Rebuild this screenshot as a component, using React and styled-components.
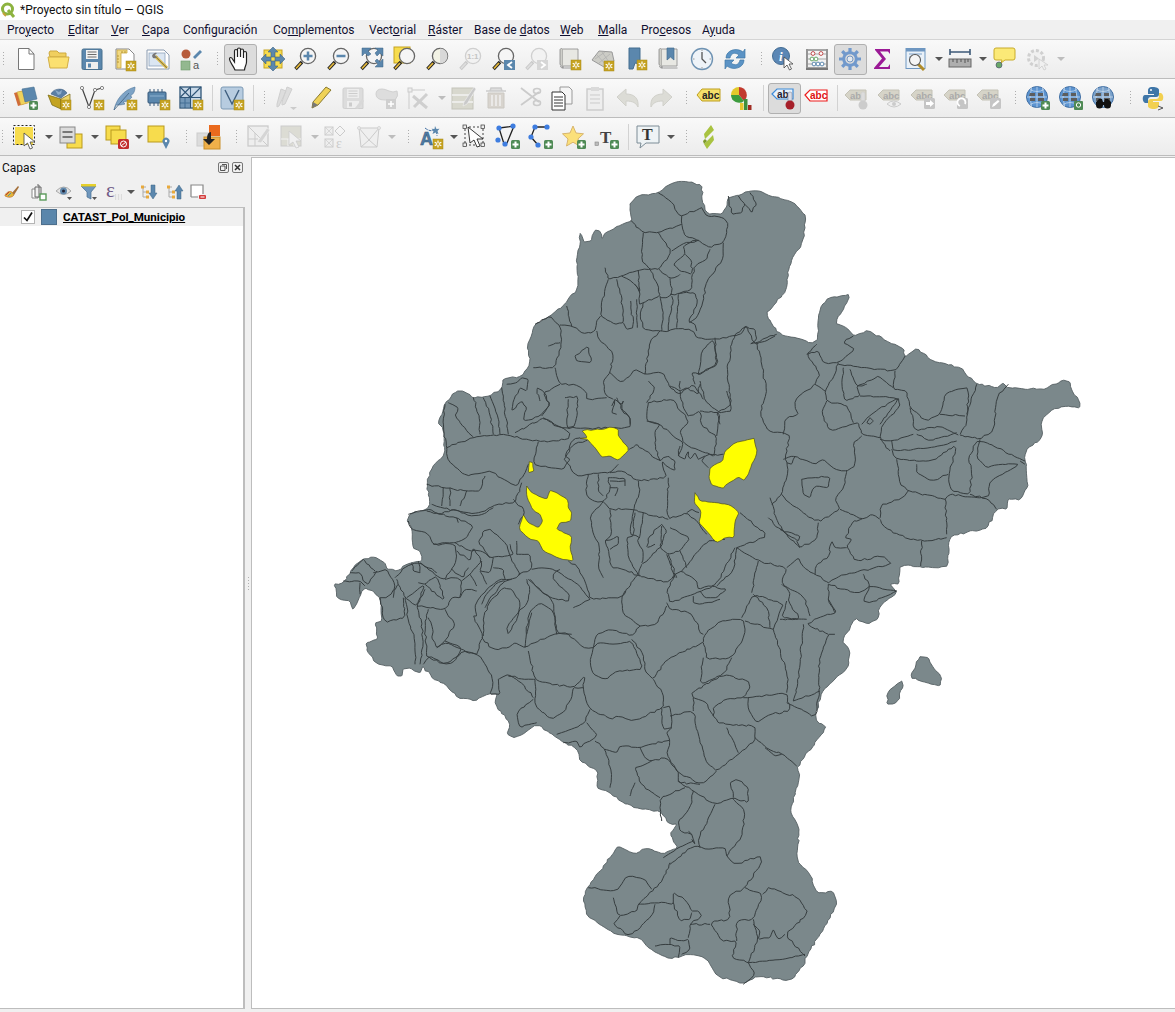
import React from "react";
import styled, { createGlobalStyle } from "styled-components";

const GlobalStyle = createGlobalStyle`
  html, body { margin: 0; padding: 0; background: #f0f0f0; }
  body { font-family: Roboto, "Liberation Sans", sans-serif; }
`;

/* ---------- map data, traced per crop of the reference ---------- */

const frame = (ox, oy, lines) =>
  lines.map(s =>
    s.split(" ").map(p => {
      const [x, y] = p.split(",").map(Number);
      return [ox + x / 3, oy + y / 3];
    })
  );

const OUTLINE =
  "630,203 637,195 658,192 670,183 683,180 702,184 702,200 708,213 722,213 727,205 728,197 735,195 750,190 760,190 770,195 790,200 798,206 806,215 803,240 790,262 786,290 775,303 766,312 778,333 817,343 820,307 828,297 851,293 835,322 847,327 854,335 868,329 890,342 904,348 905,356 917,347 932,360 962,367 967,375 977,383 997,387 1003,382 1008,387 1045,388 1063,379 1070,381 1072,390 1078,397 1080,407 1067,405 1053,408 1042,418 1042,437 1025,450 1027,480 1028,485 1020,499 1008,498 1007,508 997,508 987,527 950,535 948,565 937,567 900,564 899,583 890,583 897,592 880,605 878,618 868,623 855,617 842,640 850,650 848,667 822,690 815,718 827,727 797,765 800,775 790,810 799,827 797,860 810,873 817,892 833,890 837,905 805,957 805,963 790,980 757,975 743,983 717,975 707,958 688,953 670,958 653,950 640,937 615,933 607,928 587,915 583,898 588,885 613,853 618,845 635,853 647,847 663,853 678,847 670,833 677,823 668,822 660,810 640,808 620,800 607,790 597,787 598,770 580,760 577,748 557,737 537,723 515,737 507,733 510,722 495,703 497,693 488,693 475,700 458,697 445,683 433,678 423,665 420,672 410,667 403,668 402,675 397,675 392,665 377,663 367,650 366,642 378,638 375,622 382,620 380,597 373,590 365,587 360,595 353,609 350,600 337,597 334,583 343,582 352,568 363,558 375,556 385,562 387,568 397,570 407,563 422,560 420,550 413,547 412,528 407,520 410,513 427,508 430,503 427,483 430,470 445,453 443,427 438,422 445,402 457,390 463,390 473,397 490,395 502,387 503,378 522,375 530,363 527,345 535,323 550,315 565,303 578,287 577,267 577,255 580,245 580,232 582,235 584,241 591,240 595,229 600,230 602,238 605,232 625,222 632,220"
    .split(" ")
    .map(p => p.split(",").map(Number));

const ISLANDS = frame(700, 290, [
  "660,1097 685,1100 700,1130 725,1160 720,1185 680,1175 630,1160",
  "605,1170 610,1185 590,1235 560,1240 565,1200",
]);

const BORDERS = [
  // north
  ...frame(560, 180, [
    "212,118 250,155 295,155 365,130",
    "295,35 340,68 355,100 365,105 425,80",
    "365,105 365,130 375,165 415,178 450,200 490,185 505,130 490,110 440,105 425,80",
    "250,155 245,240 270,265 297,265 335,210 295,155",
    "335,210 375,185 415,178",
    "135,260 145,295 185,285 235,268 270,265",
    "145,295 125,360 122,405 165,430 190,425 190,385 170,295",
    "185,285 225,310 240,335 235,268",
    "225,310 240,335 238,370 250,365 300,345 295,315 270,265",
    "297,265 330,292 355,285 360,280",
    "330,292 335,340 320,350 300,350",
    "415,178 370,195 375,220 340,250 360,270 395,280 395,240 375,220",
    "450,205 440,235 410,250 395,285 395,325 355,338 330,340",
    "355,338 405,335 412,370 385,420 405,430 410,450",
    "490,185 487,240 440,300 430,360 410,410 388,425",
    "300,345 310,410 305,450",
    "335,345 340,360 325,430 325,450",
    "355,340 350,440",
    "250,365 240,400 250,445 305,450 320,452 350,442 400,450 410,470 460,475 515,465 545,458 555,435 585,445 590,475 570,490 650,460",
    "212,360 220,440 200,445 190,425",
    "230,355 232,440",
    "122,405 110,420 105,450 70,458 35,435 0,432",
    "20,375 35,435",
    "110,450 120,480 160,515 150,575 130,600 135,640 160,655",
    "150,575 185,605 225,565 255,580 310,575 330,620 360,640 400,610 430,655",
    "300,450 270,480 255,580",
    "420,580 395,575 405,610",
    "415,580 475,550 460,475 425,510 415,580",
    "45,525 85,495 95,545 50,540 45,525",
    "505,45 515,100 545,95 555,70 535,45",
    "555,70 575,95 590,70 570,35",
  ]),
  // north-west
  ...frame(330, 170, [
    "550,985 585,1020 565,1060",
    "345,700 340,770 350,830",
    "355,695 385,710 375,735 415,785 430,798",
    "430,680 450,750 450,790",
    "460,680 480,730 490,790",
    "480,675 505,740 510,790",
    "515,650 535,790",
    "350,830 430,798 520,790 620,812 715,805 720,785 640,740 555,785",
    "640,740 690,770 760,772 900,770 900,740 880,725 860,680",
    "530,640 560,635 575,620 595,625 590,660 570,650 550,690 545,720 575,690 590,710 580,750 630,735 660,700 640,660 620,650 630,690",
    "705,680 745,675 735,765 710,770 715,685",
    "625,812 610,880 660,890 700,895 720,865 705,855 725,810 750,800",
    "350,830 355,870 410,915 460,905 480,900 530,930 560,945 580,915 595,880",
    "290,940 340,950 410,960 450,960 465,915",
    "340,950 335,1005",
    "360,950 360,1005",
    "410,960 390,1005",
    "305,1000 335,1010 410,1025 450,1025 500,1000 555,995 575,935",
    "615,460 660,435 690,465 695,510 675,590 610,590",
    "655,525 690,515",
    "675,590 690,640 735,640 770,665 770,685 830,680",
    "690,640 640,665 660,700 635,735",
  ]),
  // west
  ...frame(330, 500, [
    "235,40 265,30 300,25 330,40 370,25 420,45 460,40 490,20",
    "235,60 245,85 290,95 310,130 340,125 375,125",
    "290,30 380,50 430,75 410,110 375,125",
    "380,50 385,65",
    "310,130 375,130 380,170 365,205 345,235 320,225 270,185",
    "375,125 420,150 455,150 480,170 530,165 550,160 540,130",
    "480,85 460,90 445,125 480,170",
    "480,85 530,130 540,165 570,220",
    "570,220 545,235 510,235 475,260 445,295 435,315 440,345 430,345 460,405 440,460",
    "545,235 500,245 465,285 455,310",
    "525,240 480,290 465,320",
    "560,160 600,160 605,205 565,220",
    "560,120 560,160",
    "605,205 640,200 680,210",
    "600,235 650,285 715,302 718,280 670,235 670,220 690,205",
    "590,235 600,270 590,310 560,340 530,380 535,400 565,345 570,300 545,265 520,260 480,300 460,350 460,405",
    "595,235 670,300 680,395 725,400",
    "730,320 780,295",
    "680,210 730,240 760,270 780,295",
    "505,535 535,520 580,550 610,590",
    "505,535 510,580 480,580 490,540 460,480 440,460 400,450 345,490 300,465 280,490",
    "150,290 165,365 225,350 220,290",
    "130,215 170,205 195,250 190,290",
    "60,215 90,215 100,240 115,250 140,210",
    "40,240 90,240 105,255",
    "90,245 90,280",
    "100,175 135,210",
    "65,210 100,175",
    "195,230 230,195 270,185 320,215",
    "200,235 225,290 260,315 285,250 230,290",
    "245,185 250,210 270,215",
    "265,245 285,250 320,225 345,300 285,250",
    "265,180 270,215",
    "285,265 260,315 275,360 280,430 270,490",
    "225,290 235,360 255,420 255,490",
    "260,315 295,320 345,325 365,290 390,290 405,265 440,270",
    "295,325 285,380 290,465",
    "295,350 310,390 305,410 320,440 345,420 360,390 375,370 355,345 345,325",
    "320,440 350,425 395,445",
    "345,420 395,440 375,480 345,490 290,465",
    "395,445 440,460",
    "345,235 380,230 395,240 390,290",
    "365,205 400,230 415,200",
    "380,150 420,180 430,140 455,180 420,220 395,240",
    "455,180 450,210 480,215 490,170",
    "450,210 470,250",
    "490,200 520,205 525,235",
    "420,220 440,255",
    "205,250 170,290 150,290",
  ]),
  // centre
  ...frame(560, 380, [
    "13,235 40,190 82,178",
    "13,235 50,285 85,280 150,275 175,250",
    "150,275 190,270 235,300 320,290 305,240 330,262 345,268 345,240 325,225 300,240 250,205 230,190 208,205",
    "85,280 78,340 100,360 130,362 150,330 145,290",
    "115,280 115,330 130,345",
    "145,290 195,292 195,315",
    "150,300 195,300",
    "150,320 175,320 165,345",
    "130,362 90,405 100,460 118,490 115,560 130,590",
    "130,362 150,385 215,385 250,395 325,415",
    "325,290 322,415 380,395 415,425",
    "380,395 395,385 417,395",
    "235,300 240,330 220,390 210,460 240,470",
    "150,385 155,460 135,480 145,505 155,560 190,565 240,585",
    "135,480 175,465 175,490 150,505",
    "225,395 220,465 200,470 205,530 235,580 225,590 185,650 90,655 75,600 55,560 25,540",
    "250,395 240,465 232,480 250,510 245,550 270,530 305,495 320,450 305,430",
    "305,430 265,470 260,500 285,490",
    "305,435 300,500 325,520 360,510 390,470 330,440",
    "325,520 350,590",
    "320,520 345,590",
    "360,510 380,560",
    "245,550 235,585 320,605 345,580 365,570 410,600 415,625 470,610 525,500",
    "345,580 320,630 330,665 400,640 435,625 460,615 500,625 470,650 435,650 420,630",
    "365,570 440,480 495,475",
    "260,65 285,20 265,0",
    "265,65 260,120 300,130 345,170 370,185 355,225",
    "260,120 300,130 285,150 285,190 300,240",
    "265,65 340,55 355,85 375,100 385,125 360,150 370,185 410,205 460,225",
    "385,105 420,90 425,135 470,165 462,225",
    "420,90 480,95 470,165",
    "210,130 210,110 185,85 190,60",
    "155,75 165,55 185,70 190,60",
    "170,100 155,95 165,55",
    "480,95 515,90 500,30",
    "420,0 435,60 480,95",
    "360,25 360,0",
    "330,15 360,30 380,20 415,40 420,10",
    "360,30 370,80 385,105",
    "360,195 355,225 375,235 385,210 390,235 405,215 415,235",
    "435,225 415,235",
    "490,220 460,220 435,225 425,240 445,260",
    "415,425 440,460",
    "400,645 400,665 420,670 480,655",
  ]),
  // east
  ...frame(700, 290, [
    "225,135 198,150 165,160 140,105 100,135 80,250 95,340 50,365 60,400",
    "45,140 50,220 0,250",
    "170,155 185,220 200,300 180,370 205,420 250,425 270,435 255,500 265,540 245,610 215,640",
    "350,160 320,190 360,250 345,280 290,320 285,350 295,370 255,385 250,430",
    "320,190 355,180 370,215 415,215 465,175 430,155 460,135",
    "415,215 405,250 375,300 380,330 440,345",
    "345,280 375,300",
    "415,220 480,228 585,240 610,205 615,195",
    "430,230 425,280 435,330 480,315 470,285 520,265 535,255 580,290",
    "450,235 470,285 500,280",
    "480,315 580,320 595,325 540,400",
    "585,240 580,295 620,300 630,350 680,390 720,370 735,310 770,295 805,290 800,400 780,430",
    "720,370 795,375",
    "830,280 800,370",
    "925,280 890,320 880,420 840,445 780,432",
    "380,330 365,365 390,420 455,400 475,395 485,430 540,440",
    "440,345 460,395",
    "485,400 520,365 595,320 600,345 545,405 540,440 570,480",
    "510,380 520,390 510,400 500,395 510,380",
    "630,350 645,420 720,405 775,432",
    "650,430 690,450 770,425",
    "540,445 575,450 640,430",
    "575,450 580,480 695,470 770,450",
    "575,475 590,505 700,510 770,460 745,560 755,600 810,610 815,540 805,500 835,445 975,510",
    "840,445 830,500 860,530 900,520 960,520 870,570 865,620 735,610 740,730",
    "960,510 975,520",
    "810,610 865,625 890,655",
    "590,505 600,580 625,600 735,625",
    "650,520 650,545 695,570 745,550",
    "250,505 285,495 345,520 370,505 405,535 440,540 465,525 460,455 485,435",
    "440,540 435,580 405,625 420,655 355,695 260,630 245,610",
    "285,495 275,520 260,515",
    "420,655 485,685 515,670 540,685 545,640 570,635 600,625 625,600",
    "540,685 555,710 625,745 690,750 740,740",
    "665,750 662,825",
    "485,685 460,690 435,740 455,745 440,765 465,810 550,795 575,820 420,855 385,875",
    "345,850 385,875",
    "440,770 405,770 395,750 385,800 350,820 345,850",
    "355,695 350,745 300,770 290,750",
    "260,830 295,800 312,830 345,850",
    "210,620 240,710 300,770",
    "205,680 240,715 300,735 295,750 260,730 240,715",
    "120,665 205,735 110,770",
    "110,770 175,810 260,830 245,880 310,915 330,975",
    "385,880 385,930 405,965",
    "245,880 270,905 265,930 300,985 240,985",
    "385,880 460,905 490,900 510,885 590,900",
    "490,850 510,885 490,930 510,935 590,900",
    "305,565 340,560 390,558 385,590 345,585 330,620 310,610 305,565",
    "110,770 100,840 50,885",
    "175,810 155,905",
  ]),
  // south
  ...frame(440, 590, [
    "125,140 160,175 205,170 225,155 255,170 340,130 380,125 430,170 460,170",
    "255,170 265,70 300,35 340,60 350,130",
    "275,65 260,130",
    "460,170 470,130 510,115 575,135 600,105",
    "460,170 450,210 460,250 500,265 530,240 610,235 575,150 525,160 475,155 460,170",
    "600,105 650,100 680,45",
    "600,105 550,70 545,20 555,0",
    "680,35 690,55 750,65 775,100 780,125 790,130",
    "575,145 610,190 615,240 640,265 680,205 790,155 795,130 840,90 910,85 915,130 875,200 800,205 790,155",
    "875,200 850,250 780,280 790,200",
    "640,265 670,310 670,350 580,390 530,375 515,385 450,355 430,300 435,255 400,290 320,275 285,265 265,180",
    "430,290 400,290 395,320 375,360 335,385 285,345 285,265",
    "280,325 230,365 240,410 290,395",
    "285,265 250,265 205,255",
    "450,355 435,395 380,420 350,430",
    "370,455 410,450 420,470 465,440 470,430 440,395",
    "465,450 495,475 515,545 510,590",
    "495,475 530,485 540,465 600,470 630,460 688,448",
    "600,470 615,500 630,510 680,500 715,545 785,580 830,540",
    "670,350 690,345 695,410 680,425 690,450 680,490 715,545",
    "665,350 670,415 695,410",
    "690,375 760,360 775,430 790,480 800,515 830,540 895,490 945,450 945,405 860,400 835,395 820,375 800,335 760,320 755,305 850,250 925,270 930,290 910,320 855,325 820,350 820,375",
    "760,320 760,360",
    "860,410 895,485",
    "910,320 925,320 1040,305 1050,360 990,370 950,395 925,355 925,320",
    "1040,335 1125,380 1140,300 1135,215 1165,130 1185,130",
    "1140,300 1060,330",
    "1165,130 1100,100 1135,80 1190,65 1165,25",
    "1060,330 1075,270 1090,100",
    "1000,115 1045,260 1040,305",
    "915,90 1000,115",
    "1000,115 1020,60 1030,40 940,10 905,80",
    "940,10 985,55 990,110",
    "1100,85 1025,80 1040,30",
    "945,440 985,475 1030,490 1070,525",
    "975,470 1005,495 1025,490",
    "715,545 715,575 780,580",
    "715,570 760,600 825,640 880,620 925,635 925,590 890,565 870,575 880,605 880,620",
    "880,625 915,660 905,740 860,795",
    "825,640 775,745 780,770",
    "760,600 750,650 715,690 720,720 755,730",
    "735,590 660,620 665,690",
    "660,620 630,600 600,575 585,530 605,525 635,510",
    "585,575 570,615",
    "690,820 760,765 800,775 855,770 860,795 885,820 960,795 965,815 915,890 865,915 870,985 810,995 845,1050 890,1050 875,1100 925,1115",
    "915,890 968,910 940,985 890,990 890,1050",
    "985,890 968,910",
    "985,890 1075,920 1105,965 1035,1030 1095,1095",
    "1035,1030 1015,1045 1000,1015 990,1040 955,1045 960,1020 940,1000",
    "940,985 955,1045 925,1115",
    "925,1115 1030,1105 1095,1090",
    "925,1115 945,1150 910,1180",
    "690,815 665,870 595,940 590,960 535,975 520,920",
    "445,890 530,900 560,855 615,865 635,895",
    "595,940 650,935 700,940 700,905 730,920 755,960 775,960 785,975 750,1000 745,1040",
    "700,935 720,990 750,985 755,965",
    "750,1000 810,1000",
    "645,940 635,975 570,1035 520,1000 540,975",
    "645,1065 690,1060 720,1065 715,1100",
    "690,1060 690,1040 730,1050 745,1045 750,1075 725,1090",
    "670,800 715,770 760,750",
    "745,720 755,730 760,745 765,760 755,745",
  ]),
];

const YELLOW = [
  ...frame(560, 380, [
    "60,172 82,170 65,148 130,145 150,138 175,145 175,165 208,205 175,238 150,225 125,228 105,200 82,175",
    "582,172 592,212 570,265 565,280 552,298 535,288 497,312 490,322 455,312 447,290 450,260 488,240 495,210 525,185",
    "405,335 420,360 470,365 510,372 537,395 525,420 522,470 495,470 470,485 440,450 417,425 423,390 403,365",
  ]),
  ...frame(330, 170, [
    "590,945 605,965 650,985 660,958 680,965 712,985 715,1010 725,1025 722,1050 690,1055 680,1075 725,1095 720,1130 730,1170 695,1165 640,1140 625,1110 600,1105 567,1075 580,1030 595,1055 625,1070 638,1050 630,1030 607,1015 590,975",
    "598,872 608,875 612,900 595,905",
  ]),
];

// round the traced corners off, then break long segments up so borders look hand digitised
let seed = 7;
const jitter = () => {
  seed = (seed * 9301 + 49297) % 233280;
  return seed / 233280 - 0.5;
};

const soften = pts => {
  const out = [pts[0]];
  for (let i = 0; i < pts.length - 1; i++) {
    const [x0, y0] = pts[i];
    const [x1, y1] = pts[i + 1];
    out.push([x0 + (x1 - x0) * 0.12, y0 + (y1 - y0) * 0.12]);
    out.push([x0 + (x1 - x0) * 0.88, y0 + (y1 - y0) * 0.88]);
  }
  out.push(pts[pts.length - 1]);
  return out;
};

const roughen = (pts, amount = 1.9) => {
  const out = [pts[0]];
  for (let i = 1; i < pts.length; i++) {
    const [x0, y0] = pts[i - 1];
    const [x1, y1] = pts[i];
    const steps = Math.floor(Math.hypot(x1 - x0, y1 - y0) / 3);
    for (let s = 1; s < steps; s++) {
      out.push([
        x0 + ((x1 - x0) * s) / steps + jitter() * amount,
        y0 + ((y1 - y0) * s) / steps + jitter() * amount,
      ]);
    }
    out.push(pts[i]);
  }
  return out;
};

const toPath = (pts, close) =>
  "M" + pts.map(p => p[0].toFixed(1) + " " + p[1].toFixed(1)).join("L") + (close ? "Z" : "");

const OUTLINE_D = toPath(roughen(soften([...OUTLINE, OUTLINE[0]])), true);
const ISLANDS_D = ISLANDS.map(p => toPath(roughen(soften([...p, p[0]])), true)).join("");
const BORDERS_D = BORDERS.map(p => toPath(roughen(soften(p)))).join("");
const YELLOW_D = YELLOW.map(p => toPath(roughen(soften([...p, p[0]]), 1), true)).join("");

/* ---------- layout ---------- */

const Page = styled.div`
  width: 1175px;
  height: 1012px;
  overflow: hidden;
  display: flex;
  flex-direction: column;
  background: #f0f0f0;
  color: #000;
  font-size: 12px;
`;

const TitleBar = styled.div`
  height: 20px;
  background: #fff;
  display: flex;
  align-items: center;
  gap: 4px;
  font-size: 12px;
  color: #111;
`;

const MenuBar = styled.div`
  height: 19px;
  display: flex;
  align-items: center;
  padding-left: 7px;
  background: #f0f0f0;
  border-bottom: 1px solid #d4d4d4;
`;

const MenuItem = styled.span`
  width: ${p => p.$w}px;
  flex: none;
  color: #101030;
  white-space: nowrap;
  font-size: 12px;
`;

const Toolbar = styled.div`
  height: ${p => p.$h || 38}px;
  flex: none;
  display: flex;
  align-items: center;
  background: linear-gradient(#f9f9f9, #ececec);
  border-bottom: 1px solid #bcbcbc;
`;

const Btn = styled.div`
  width: 33px;
  height: 31px;
  flex: none;
  box-sizing: border-box;
  display: flex;
  align-items: center;
  padding-left: ${p => (p.$on ? 3 : 4)}px;
  ${p => p.$on && "background: #dcdcdc; border: 1px solid #b0b0b0; border-radius: 3px;"}
`;

const Caret = styled.div`
  width: ${p => p.$w || 11}px;
  flex: none;
  display: flex;
  justify-content: center;
  &::after {
    content: "";
    border-left: 4px solid transparent;
    border-right: 4px solid transparent;
    border-top: 4px solid ${p => (p.$off ? "#bdbdbd" : "#555")};
  }
`;

const Grip = styled.div`
  width: ${p => p.$w}px;
  flex: none;
  display: flex;
  justify-content: flex-end;
  padding-right: 4px;
  box-sizing: border-box;
  &::after {
    content: "";
    width: 4px;
    height: 16px;
    background-image: radial-gradient(#adadad 0.7px, transparent 0.9px);
    background-size: 3px 3px;
  }
`;

const Sep = styled.div`
  width: ${p => p.$w}px;
  flex: none;
  display: flex;
  justify-content: center;
  &::after {
    content: "";
    width: 1px;
    height: 26px;
    background: #d2d2d2;
  }
`;

const Main = styled.div`
  flex: 1;
  min-height: 0;
  display: flex;
  padding: 1px 0 3px;
`;

const Side = styled.aside`
  width: 245px;
  flex: none;
  display: flex;
  flex-direction: column;
`;

const DockHead = styled.div`
  height: 21px;
  flex: none;
  display: flex;
  align-items: center;
  justify-content: space-between;
  padding: 0 2px;
  font-size: 12px;
  color: #111;
`;

const DockButtons = styled.div`
  display: flex;
  gap: 3px;
`;

const DockBtn = styled.svg.attrs({ viewBox: "0 0 11 11" })`
  width: 11px;
  height: 11px;
`;

const PanelBar = styled.div`
  height: 29px;
  flex: none;
  box-sizing: border-box;
  display: flex;
  align-items: center;
  padding: 0 0 2px 4px;
`;

const PanelBtn = styled.div`
  width: ${p => p.$w || 25}px;
  flex: none;
  display: flex;
  align-items: center;
`;

const Tree = styled.div`
  flex: 1;
  background: #fff;
  border: solid #bdbdbd;
  border-width: 1px 2px 1px 0;
`;

const LayerRow = styled.div`
  height: 18px;
  background: #f0f0f0;
  display: flex;
  align-items: center;
  padding-left: 21px;
`;

const Check = styled.div`
  width: 14px;
  height: 14px;
  box-sizing: border-box;
  background: #fff;
  border: 1px solid #b5b5b5;
  display: flex;
  align-items: center;
  justify-content: center;
  margin-right: 6px;
`;

const Swatch = styled.div`
  width: 16px;
  height: 16px;
  box-sizing: border-box;
  background: #5a86ab;
  border: 1px solid #4d6f8c;
  margin-right: 6px;
`;

const LayerName = styled.span`
  font-weight: 700;
  text-decoration: underline;
  font-size: 11.6px;
  white-space: nowrap;
`;

const Splitter = styled.div`
  width: 6px;
  flex: none;
  display: flex;
  align-items: center;
  justify-content: center;
  &::after {
    content: "";
    width: 3px;
    height: 14px;
    background-image: radial-gradient(#b0b0b0 0.6px, transparent 0.8px);
    background-size: 3px 3px;
  }
`;

const Canvas = styled.div`
  flex: 1;
  background: #fff;
  border: 1px solid #bdbdbd;
  border-right: 0;
  box-sizing: border-box;
  overflow: hidden;
`;

const MapSvg = styled.svg`
  display: block;
  width: 923px;
  height: 851px;
`;

const Icon = styled.svg.attrs({ viewBox: "0 0 24 24" })`
  width: 24px;
  height: 24px;
  flex: none;
  overflow: visible;
  font-family: "Liberation Sans", sans-serif;
`;

const Small = styled.svg.attrs({ viewBox: "0 0 16 16" })`
  width: 16px;
  height: 16px;
  flex: none;
  overflow: visible;
`;

/* ---------- icon parts ---------- */

const Gear = ({ x, y }) => (
  <g transform={`translate(${x} ${y})`}>
    <rect width="10" height="10" fill="#c6a321" stroke="#a98a18" strokeWidth=".5" />
    <path d="M5 1.5v7M1.7 3.2l6.6 3.6M8.3 3.2L1.7 6.8" stroke="#fff" strokeWidth="1.2" />
    <circle cx="5" cy="5" r="1.1" fill="#c6a321" />
  </g>
);

const Plus = ({ x, y }) => (
  <g transform={`translate(${x} ${y})`}>
    <rect width="9" height="9" rx="1.5" fill="#4f8a55" />
    <path d="M4.5 1.5v6M1.5 4.5h6" stroke="#fff" strokeWidth="2" />
  </g>
);

const Glass = ({ off, dim, children }) => (
  <g>
    <line x1="8" y1="15" x2="1.5" y2="22" stroke={off ? "#c8c8c8" : "#222"} strokeWidth="3.4" />
    <line x1="7" y1="16" x2="2" y2="21.5" stroke={off ? "#ddd" : "#e5b93c"} strokeWidth="1.8" />
    <circle cx="14" cy="9" r="7.6" fill={off ? "#f2f2f2" : dim ? "#f2f2e4" : "#f5f5f5"} stroke={off ? "#cfcfcf" : "#666"} strokeWidth="1.3" />
    {children}
  </g>
);

const Scroll = () => (
  <g>
    <path d="M2 3c0-2 3-2 3 0v18c0-2-3-2-3-4z" fill="#cfcfc9" stroke="#888" strokeWidth=".8" />
    <path d="M5 2h15v17H5" fill="#e8e8e3" stroke="#8a8a8a" strokeWidth=".8" />
    <path d="M2.5 19c0 2 2.5 2.5 4 2h14" fill="none" stroke="#8a8a8a" strokeWidth=".8" />
  </g>
);

const Tag = ({ text = "abc" }) => (
  <g>
    <path d="M0 9l5-5h16v10H5z" fill="#d6d4c8" stroke="#c4c2b6" />
    <text x="5" y="12.5" fontSize="9.5" fontWeight="700" fill="#aaa">{text}</text>
  </g>
);

const OFF = "#cbcbcb";

/* row 1 */
const NewIcon = () => (
  <Icon><path d="M4.5 1.5H15l5 5.500v15.500H4.5z" fill="#fff" stroke="#777" /><path d="M15 1.5V7h5" fill="none" stroke="#777" /></Icon>
);
const OpenIcon = () => (
  <Icon>
    <path d="M2 6l1-2h7l2 2h7v4H3z" fill="#f0cf5e" stroke="#cda93f" />
    <path d="M1 10h21l-2 11H3z" fill="#fbe070" stroke="#d2ae45" />
  </Icon>
);
const SaveIcon = ({ off }) => (
  <Icon>
    <path d="M2 3.5Q2 2 3.5 2h17Q22 2 22 3.500v19H3.500Q2 22.500 2 21z" fill={off ? "#dcdcdc" : "#5b87ad"} stroke={off ? "#cfcfcf" : "#48708f"} />
    <rect x="6" y="3" width="12" height="9" fill={off ? "#ededed" : "#f2f2f2"} />
    <path d="M7.5 5h9M7.5 7.5h9M7.5 10h9" stroke={off ? "#ccc" : "#6a6a6a"} />
    <rect x="6" y="15" width="12" height="7" fill="#eee" />
    <rect x="8" y="16.5" width="3" height="4" fill={off ? "#ccc" : "#5b87ad"} />
    {off && <path d="M14 22l7-9 2 2-6 8z" fill="#d8d8d8" />}
  </Icon>
);
const ProjectIcon = () => (
  <Icon>
    <path d="M3 2h13l5 5v15H3z" fill="#fff" stroke="#888" />
    <path d="M4 3h10v3H8v15H4z" fill="#f2d981" stroke="#caa83f" strokeWidth=".8" />
    <path d="M4 9h2M4 12h2M4 15h2M9 4v2M12 4v2" stroke="#a8882a" strokeWidth=".8" />
    <Gear x={13} y={14} />
  </Icon>
);
const LayoutIcon = () => (
  <Icon>
    <path d="M1 3h17l5 5v14H1z" fill="#fff" stroke="#8a9bb0" />
    <rect x="3" y="6" width="16" height="13" fill="#dbe6f2" stroke="#8fa4bc" strokeWidth=".8" />
    <path d="M9 9l12 12" stroke="#d9b845" strokeWidth="3" />
    <path d="M9 9l12 12" stroke="#555" strokeWidth=".6" />
    <path d="M6 9a4 4 0 0 1 5-3L9 8l1 2 2-1a4 4 0 0 1-5 2z" fill="#777" />
  </Icon>
);
const StyleIcon = () => (
  <Icon>
    <circle cx="7" cy="7" r="4.5" fill="#b75c3c" />
    <path d="M14 10l7-7 2 2-7 7z" fill="#5b87ad" />
    <rect x="2" y="14" width="9" height="9" fill="#93b88f" stroke="#6f9a6b" strokeWidth=".6" />
    <text x="14" y="22" fontSize="11" fill="#555">a</text>
  </Icon>
);
const PanIcon = () => (
  <Icon>
    <path d="M7 23C5 18 1.5 15 1.5 12c0-2 2-2 3 0l2 3V4c0-2 3-2 3 0v6V2.5c0-2 3-2 3 0V10V3.5c0-2 3-2 3 0V11V6c0-2 3-2 3 0v9c0 3-2 5-2 8z" fill="#fff" stroke="#222" strokeWidth="1.2" />
  </Icon>
);
const PanSelIcon = () => (
  <Icon>
    <rect x="3" y="3" width="18" height="18" fill="#f7dc4d" stroke="#c6a321" />
    <path d="M12 0l5 5h-3v5h-4V5H7zM12 24l-5-5h3v-5h4v5h3zM0 12l5-5v3h5v4H5v3zM24 12l-5 5v-3h-5v-4h5V7z" fill="#5b87ad" stroke="#3f6585" strokeWidth=".6" />
  </Icon>
);
const ZoomInIcon = () => (
  <Icon><Glass /><path d="M14 4.5v9M9.5 9h9" stroke="#5b87ad" strokeWidth="2.5" /></Icon>
);
const ZoomOutIcon = () => (
  <Icon><Glass /><path d="M9.5 9h9" stroke="#5b87ad" strokeWidth="2.5" /></Icon>
);
const ZoomFullIcon = () => (
  <Icon>
    <Glass />
    <path d="M2 1h9L8 4l3 3-3 2-3-3-3 3zM23 1v8l-3-3-3 3-2-3 3-3-3-2zM23 20h-8l3-3-3-3 2-2 3 3 3-3z" fill="#5b87ad" stroke="#3f6585" strokeWidth=".5" />
  </Icon>
);
const ZoomSelIcon = () => (
  <Icon>
    <rect x="1" y="0" width="16" height="16" fill="#f7dc4d" stroke="#c6a321" />
    <Glass />
  </Icon>
);
const ZoomLayerIcon = () => (
  <Icon><Glass dim /><path d="M14 1.5a7.5 7.5 0 0 1 0 15z" fill="#d8d8d8" /></Icon>
);
const ZoomNativeIcon = () => (
  <Icon><Glass off /><text x="8" y="12" fontSize="8" fontWeight="700" fill="#c4c4c4">1:1</text></Icon>
);
const ZoomLastIcon = ({ off }) => (
  <Icon>
    <Glass off={off} />
    <rect x="12" y="13" width="11" height="10" fill={off ? "#d6d6d6" : "#5b87ad"} />
    <path d={off ? "M16 15l4 3-4 3" : "M20 15l-4 3 4 3"} fill="none" stroke="#fff" strokeWidth="1.8" />
  </Icon>
);
const NewMapIcon = () => (<Icon><Scroll /><Gear x={13} y={13} /></Icon>);
const New3dIcon = () => (
  <Icon>
    <path d="M1 13L8 4l13 1 2 9-10 6z" fill="#ccccc6" stroke="#999" />
    <path d="M4 12l10-7M8 16l11-9M6 8l9 10M11 5l7 10" stroke="#aaa" strokeWidth=".6" />
    <Gear x={13} y={14} />
  </Icon>
);
const BookmarkNewIcon = () => (
  <Icon>
    <path d="M5 1h11v16l-5-1-2 6H5z" fill="#5b87ad" stroke="#456f90" />
    <Gear x={13} y={13} />
  </Icon>
);
const BookmarksIcon = () => (
  <Icon><Scroll /><path d="M10 1h7v12l-3.5-3L10 13z" fill="#5b87ad" stroke="#456f90" strokeWidth=".7" /></Icon>
);
const ClockIcon = () => (
  <Icon>
    <circle cx="12" cy="12" r="10.5" fill="#eef3f8" stroke="#6f93b3" strokeWidth="1.4" />
    <path d="M12 5v7l4 4" fill="none" stroke="#555" strokeWidth="1.3" />
    <path d="M12 2.5V4M21 12h-1.500M12 21.500V20M3 12h1.500" stroke="#999" />
  </Icon>
);
const RefreshIcon = () => (
  <Icon>
    <path d="M3 11C3 3 14 0 20 5l2-3v9h-9l3-3C12 5 8 6 7 11z" fill="#5b93c5" stroke="#3f78a8" strokeWidth=".7" />
    <path d="M21 13c0 8-11 11-17 6l-2 3v-9h9l-3 3c4 3 8 2 9-3z" fill="#5b93c5" stroke="#3f78a8" strokeWidth=".7" />
  </Icon>
);
const IdentifyIcon = () => (
  <Icon>
    <circle cx="9" cy="9" r="8.5" fill="#5b87b5" stroke="#436c93" />
    <text x="7" y="14" fontSize="13" fontWeight="700" fontStyle="italic" fill="#fff" fontFamily="Liberation Serif">i</text>
    <path d="M12 10v11l3-3 2.5 5 2-1-2.500-5h4z" fill="#fff" stroke="#444" strokeWidth=".8" />
  </Icon>
);
const AbacusIcon = () => (
  <Icon>
    <path d="M2 21V2M22 21V2M3 3h18M3 21h18" stroke="#555" strokeWidth="1.2" fill="none" />
    <path d="M3 7h18M3 12h18M3 17h18" stroke="#888" strokeWidth=".7" />
    <g fill="#fff" stroke="#c24b4b"><circle cx="8" cy="6.5" r="1.9" /><circle cx="16" cy="6.5" r="1.9" /></g>
    <g fill="#fff" stroke="#69a869"><circle cx="7" cy="12" r="1.9" /><circle cx="11" cy="12" r="1.9" /></g>
    <g fill="#fff" stroke="#5b87ad"><circle cx="9" cy="17" r="1.9" /><circle cx="13" cy="17" r="1.9" /><circle cx="17" cy="17" r="1.9" /></g>
    <rect x="1" y="21" width="22" height="2" fill="#777" />
  </Icon>
);
const ToolboxIcon = () => (
  <Icon>
    <g stroke="#7199cc" strokeWidth="3.2">
      <path d="M12 1v4M12 19v4M1 12h4M19 12h4M4.200 4.200L7 7M17 17l2.800 2.800M19.800 4.200L17 7M7 17l-2.800 2.800" />
    </g>
    <circle cx="12" cy="12" r="6.3" fill="none" stroke="#7199cc" strokeWidth="3" />
    <circle cx="12" cy="12" r="3" fill="#e4e9ef" stroke="#5c84b8" strokeWidth=".8" />
  </Icon>
);
const SumIcon = () => (
  <Icon><path d="M4 2h15v5l-2-2.500H9l6 7.500-7 8h9l2-3v5H3v-1l8-9.500L4 3z" fill="#9b1a96" /></Icon>
);
const FormIcon = () => (
  <Icon>
    <rect x="2" y="1.5" width="19" height="20" fill="#eaf1f8" stroke="#6f97c1" />
    <rect x="2" y="1.5" width="19" height="3" fill="#6f97c1" />
    <path d="M5 7h13M5 10h6" stroke="#7fa4c9" strokeWidth="1.2" />
    <path d="M14 17l6 6" stroke="#b08c2a" strokeWidth="3" />
    <circle cx="11" cy="13" r="5.5" fill="#f5f5f5" stroke="#555" strokeWidth="1.1" />
  </Icon>
);
const MeasureIcon = () => (
  <Icon>
    <path d="M2 5h20M2 2v6M22 2v6" stroke="#3e5a78" strokeWidth="1.6" fill="none" />
    <rect x="1" y="12" width="22" height="8" fill="#aeaeae" stroke="#666" />
    <path d="M5 12v3M9 12v4M13 12v3M17 12v4M20 12v3" stroke="#555" />
  </Icon>
);
const AnnotationIcon = () => (
  <Icon>
    <path d="M3 1h17q2 0 2 2v8q0 2-2 2h-8l-4 3 1-3H3q-2 0-2-2V3q0-2 2-2z" fill="#fbe977" stroke="#c8ab2a" />
    <circle cx="6" cy="18" r="3" fill="#69a869" stroke="#446" strokeWidth=".6" />
  </Icon>
);
const ProcessingIcon = () => (
  <Icon>
    <circle cx="10" cy="11" r="7.5" fill="#f0f0f0" stroke="#d0d0d0" strokeWidth="3" strokeDasharray="3 2" />
    <path d="M8 8l5 3.500-5 3.500z" fill="#d2d2d2" />
    <path d="M13 12v10l3-3 2 4 2-1-2-4h4z" fill="#f0f0f0" stroke="#ccc" strokeWidth=".8" />
  </Icon>
);

/* row 2 */
const DataSourceIcon = () => (
  <Icon>
    <path d="M0 7l11-3 3 13-10 3z" fill="#d06c38" />
    <path d="M3 6l11-2 3 12-10 3z" fill="#efd15a" stroke="#c9a63a" strokeWidth=".5" />
    <path d="M8 3l12-2 3 12-12 3z" fill="#5b87ad" stroke="#456f90" strokeWidth=".6" />
    <Plus x={15} y={15} />
  </Icon>
);
const GpkgIcon = () => (
  <Icon>
    <path d="M1 9l4 10 9 4V13z" fill="#c3a321" stroke="#75650e" strokeWidth=".7" />
    <path d="M14 13l9-5v9l-9 6z" fill="#eed56a" stroke="#75650e" strokeWidth=".7" />
    <path d="M4 8a9 8 0 0 1 16-1l-6 5z" fill="#5b7fa5" stroke="#3c5d80" strokeWidth=".6" />
    <path d="M8 4l4 2 3-2-1 4-3 1z" fill="#8cabc9" />
    <Gear x={14} y={14} />
  </Icon>
);
const VertexIcon = () => (
  <Icon>
    <path d="M2 2l7 19 6-17 7-2" fill="none" stroke="#444" strokeWidth="1.2" />
    <g fill="#fff" stroke="#666" strokeWidth=".8"><circle cx="2" cy="2" r="1.6" /><circle cx="15" cy="4" r="1.6" /><circle cx="22" cy="2" r="1.6" /><circle cx="9" cy="21" r="1.6" /></g>
    <Gear x={14} y={14} />
  </Icon>
);
const FeatherIcon = () => (
  <Icon>
    <path d="M1 24C3 14 10 4 22 1c0 6-3 8-5 9l2 1c-3 4-7 5-9 5l2 2c-3 1-7 1-9 1z" fill="#7da3c6" stroke="#4f7599" strokeWidth=".6" />
    <path d="M1 24L16 7" stroke="#3f5f7f" strokeWidth=".8" />
    <Gear x={14} y={14} />
  </Icon>
);
const ChipIcon = () => (
  <Icon>
    <rect x="2" y="6" width="18" height="11" rx="1" fill="#5b87ad" stroke="#36597a" />
    <path d="M4 3v3M8 3v3M12 3v3M16 3v3M4 17v3M8 17v3M12 17v3" stroke="#36597a" />
    <path d="M4 10h14" stroke="#8db0cf" />
    <Gear x={14} y={14} />
  </Icon>
);
const MeshIcon = () => (
  <Icon>
    <rect x="1" y="1" width="21" height="21" fill="#c9d9e8" stroke="#2f5577" strokeWidth="1.3" />
    <path d="M11.5 1v21M1 11.5h21M1 17h10M6 11.5V22M1 1l10.500 10.500M11.500 1L1 11.500M11.500 11.500L22 1" stroke="#2f5577" strokeWidth="1.1" fill="none" />
    <rect x="1.5" y="12" width="9.5" height="9.5" fill="#4f7ba3" opacity=".7" />
    <Gear x={14} y={14} />
  </Icon>
);
const EditsIcon = () => (
  <Icon>
    <rect x="1" y="1" width="22" height="22" rx="2" fill="#b7cce0" stroke="#7d9ab5" />
    <path d="M5 4l7 14 7-14" fill="none" stroke="#3f5f7f" strokeWidth="1.4" />
    <Gear x={14} y={14} />
  </Icon>
);
const PencilsOffIcon = () => (
  <Icon>
    <path d="M6 3l5 2-7 15-2 1v-3zM12 1l5 2-7 15-3 1v-3z" fill="#ddd" stroke="#cfcfcf" />
    <path d="M15 21h7l-3.500 3z" fill={OFF} />
  </Icon>
);
const PencilIcon = () => (
  <Icon>
    <path d="M18 1l5 3-13 15-6 3 1-6z" fill="#efd257" stroke="#8a7a30" />
    <path d="M5 16l5 3-6 3z" fill="#777" />
  </Icon>
);
const BlobOffIcon = () => (
  <Icon>
    <path d="M2 8q0-5 6-5 3 0 7 2t8 0q2 5-2 9H11Q2 14 2 8z" fill="#ddd" stroke="#d0d0d0" />
    <rect x="12" y="13" width="10" height="10" fill="#cfcfcf" />
    <path d="M17 15v6M14 18h6" stroke="#fff" strokeWidth="1.5" />
  </Icon>
);
const CrossOffIcon = () => (
  <Icon>
    <path d="M2 3v20M2 4h16" stroke={OFF} fill="none" />
    <rect x="1" y="2" width="4" height="4" fill="#eee" stroke={OFF} />
    <path d="M6 10l14 12M20 8L7 21" stroke="#cfcfcf" strokeWidth="3" />
  </Icon>
);
const TableOffIcon = () => (
  <Icon>
    <rect x="1" y="2" width="21" height="21" fill="#d8d8ce" stroke="#c4c4ba" />
    <path d="M1 9h21M1 16h21" stroke="#f2f2f2" strokeWidth="1.5" />
    <path d="M13 16L23 1l2 2-9 15-4 2z" fill="#c9c9c9" stroke="#f0f0f0" strokeWidth=".6" />
  </Icon>
);
const TrashOffIcon = () => (
  <Icon>
    <path d="M2 5h20M6 5l1-3h10l1 3" stroke={OFF} strokeWidth="1.5" fill="#dedede" />
    <path d="M4 7h16v15H4z" fill="#d8d4ce" stroke="#cbc8c2" />
    <path d="M8 9v11M12 9v11M16 9v11" stroke="#f2f2f2" strokeWidth="1.4" />
  </Icon>
);
const ScissorsOffIcon = () => (
  <Icon>
    <path d="M4 2l18 14M22 6L4 19" stroke={OFF} strokeWidth="1.8" />
    <ellipse cx="20" cy="5" rx="3.5" ry="2.5" fill="none" stroke={OFF} strokeWidth="1.6" />
    <ellipse cx="20" cy="17" rx="3.5" ry="2.5" fill="none" stroke={OFF} strokeWidth="1.6" />
  </Icon>
);
const CopyIcon = () => (
  <Icon>
    <path d="M10 1h9l3 3v14H10z" fill="#f5f5f5" stroke="#999" />
    <path d="M2 6h10l3 3v15H2z" fill="#fff" stroke="#333" />
    <path d="M4 11h9M4 14h9M4 17h9M4 20h9" stroke="#333" />
  </Icon>
);
const PasteOffIcon = () => (
  <Icon>
    <rect x="4" y="3" width="16" height="21" fill="#eee" stroke={OFF} strokeWidth="1.4" />
    <rect x="8" y="1" width="8" height="4" fill="#dadada" />
    <path d="M7 9h10M7 13h10M7 17h10" stroke={OFF} />
  </Icon>
);
const UndoOffIcon = ({ flip }) => (
  <Icon>
    <g transform={flip ? "translate(24 0) scale(-1 1)" : undefined}>
      <path d="M1 11l9-8v5c8 0 13 4 12 13-2-4-5-6-12-6v5z" fill="#dcdcd6" stroke="#d0d0ca" />
    </g>
  </Icon>
);
const AbcYellowIcon = () => (
  <Icon>
    <path d="M0 9l5-6h18v12H5z" fill="#f4e06a" stroke="#bf9f1e" />
    <text x="5" y="13" fontSize="10" fontWeight="700" fill="#222">abc</text>
  </Icon>
);
const DiagramIcon = () => (
  <Icon>
    <path d="M9 1a8 8 0 0 1 5 14L9 9z" fill="#c23a2e" />
    <path d="M9 1a8 8 0 0 0-8 8h8z" fill="#e3c92c" />
    <path d="M1 9a8 8 0 0 0 13 6L9 9z" fill="#3d9c3d" />
    <rect x="10" y="17" width="3.5" height="7" fill="#e6c62c" />
    <rect x="14" y="13" width="3.5" height="11" fill="#3d8f3d" />
    <rect x="18" y="19" width="3.5" height="5" fill="#a02c22" />
  </Icon>
);
const PinIcon = ({ off, children }) => (
  <Icon>
    {children}
    <path d="M16 8a2 2 0 0 1 4 0v7h-4z" fill={off ? "#dcdcdc" : "#d8dde8"} stroke={off ? "#ccc" : "#8a8a9a"} strokeWidth=".6" />
    <circle cx="18" cy="19" r="4.5" fill={off ? "#cccccc" : "#a6202a"} />
  </Icon>
);
const AbcRedIcon = () => (
  <Icon>
    <path d="M0 9l5-5h17v11H5z" fill="#fff" stroke="#ee1c1c" strokeWidth="1.2" />
    <text x="5" y="13" fontSize="10" fontWeight="700" fill="#e01010">abc</text>
  </Icon>
);
const AbcEyeIcon = () => (
  <Icon>
    <Tag />
    <path d="M9 18q6-6 14 0-7 6-14 0z" fill="#eee" stroke={OFF} />
    <circle cx="16" cy="18" r="2" fill={OFF} />
  </Icon>
);
const AbcBadgeIcon = ({ glyph }) => (
  <Icon>
    <Tag />
    <rect x="13" y="12" width="11" height="11" rx="1.5" fill="#c5c5c5" />
    {glyph === "arrow" && <path d="M15 16h4v-2l4 3.500-4 3.500v-2h-4z" fill="#fff" />}
    {glyph === "turn" && <path d="M16 20a4 4 0 1 1 5-2" fill="none" stroke="#fff" strokeWidth="1.8" />}
    {glyph === "pen" && <path d="M15 21l1-3 5-4 1.500 1.500-5 4.500z" fill="#fff" />}
  </Icon>
);
const Globe = ({ dark }) => (
  <g>
    <circle cx="11" cy="11" r="10.5" fill={dark ? "#7ba2cb" : "#5b93d0"} stroke="#3f6ea3" />
    <path d="M1 11h20M11 .5v21M4 3.500q7 4 14 0M4 18.500q7-4 14 0M5.500 2q-3 9 0 18M16.500 2q3 9 0 18" stroke="#cfe0f0" strokeWidth=".7" fill="none" />
    <path d="M4 7h5v3H3zM12 7h5v3h-5zM4 12h5v3H4zM12 12h6v3h-6z" fill="#5d5d5d" />
  </g>
);
const GlobeAddIcon = () => (<Icon><Globe /><Plus x={15} y={15} /></Icon>);
const GlobeSearchIcon = () => (
  <Icon>
    <Globe />
    <rect x="15" y="15" width="9" height="9" rx="1" fill="#4f8a55" />
    <circle cx="19.5" cy="19" r="2.2" fill="none" stroke="#fff" />
  </Icon>
);
const GlobeBinoIcon = () => (
  <Icon>
    <Globe dark />
    <path d="M4 16l3-3h3l1 3h1l1-3h3l3 3v3a3.500 3.500 0 0 1-7 0h-1a3.500 3.500 0 0 1-7 0z" fill="#111" />
  </Icon>
);
const PythonIcon = () => (
  <Icon>
    <path d="M12 1C7 1 7 3 7 6v2h6v1H4c-3 0-3 7 0 8h3v-3c0-2 1-3 3-3h5c2 0 3-1 3-3V4c0-2-3-3-6-3z" fill="#3f76a8" />
    <path d="M12 23c5 0 6-2 6-5v-2h-6v-1h8c3 0 3-7 0-8h-2v3c0 2-1 3-3 3h-5c-2 0-3 1-3 3v4c0 2 3 3 5 3z" fill="#f2d04f" />
    <circle cx="10" cy="4" r="1" fill="#fff" />
    <path d="M17 20l5 2-5 2" stroke="#555" fill="none" />
  </Icon>
);

/* row 3 */
const SelectIcon = () => (
  <Icon>
    <rect x="2" y="2" width="18" height="18" fill="#f7dc4d" />
    <rect x=".5" y=".5" width="21" height="19" fill="none" stroke="#222" strokeDasharray="2 2" />
    <path d="M11 8v13l3.500-3 2.500 6 2.500-1-2.500-6h5z" fill="#fff" stroke="#444" strokeWidth=".8" />
  </Icon>
);
const SelectFormIcon = () => (
  <Icon>
    <rect x="8" y="9" width="15" height="14" fill="#f7dc4d" stroke="#b99a1e" />
    <rect x="1" y="2" width="15" height="16" fill="#dcdcdc" stroke="#888" />
    <path d="M3.5 7h10M3.5 12h10" stroke="#777" strokeWidth="2" />
  </Icon>
);
const DeselectIcon = () => (
  <Icon>
    <rect x="1" y="1" width="14" height="14" fill="#f7dc4d" stroke="#b99a1e" />
    <rect x="6" y="5" width="15" height="14" fill="#f7dc4d" stroke="#b99a1e" />
    <rect x="13" y="14" width="11" height="10" rx="1.5" fill="#c22d2d" />
    <circle cx="18.5" cy="19" r="3" fill="none" stroke="#fff" />
    <path d="M16 21l5-4" stroke="#fff" />
  </Icon>
);
const SelectLocIcon = () => (
  <Icon>
    <rect x="1" y="1" width="16" height="16" fill="#f7dc4d" stroke="#b99a1e" />
    <path d="M19 24l-3-6a3.500 3.500 0 1 1 6 0z" fill="#5b87ad" />
    <circle cx="19" cy="16" r="1.2" fill="#fff" />
  </Icon>
);
const MoveLayerIcon = () => (
  <Icon>
    <rect x="0" y="8" width="13" height="13" fill="#dcdcdc" stroke="#ccc" />
    <rect x="12" y="0" width="11" height="11" fill="#ea6a1e" />
    <rect x="7" y="12" width="16" height="12" fill="#efb04a" stroke="#c98f2b" />
    <path d="M14 7v7h4l-6 6-6-6h4q0-7 4-7z" fill="#222" />
  </Icon>
);
const SplitOffIcon = () => (
  <Icon>
    <rect x="1" y="1" width="20" height="20" fill="#eee" stroke={OFF} strokeWidth="1.3" />
    <path d="M1 1l20 20M1 14h10M8 21V8" stroke={OFF} />
    <path d="M10 17L20 3l3 2-9 13z" fill="#d5d5d5" stroke="#f3f3f3" strokeWidth=".6" />
  </Icon>
);
const ReshapeOffIcon = () => (
  <Icon>
    <rect x="1" y="1" width="20" height="20" fill="#dcdcd4" stroke={OFF} />
    <path d="M1 14h20M8 14v7M14 14v7" stroke="#f2f2f2" />
    <path d="M9 6v14l4-3 3 6 3-1-3-6h5z" fill="#f0f0f0" stroke={OFF} strokeWidth=".8" />
  </Icon>
);
const SplitPartsOffIcon = () => (
  <Icon>
    <g fill="#eee" stroke={OFF}><rect x="1" y="2" width="8" height="8" /><rect x="1" y="14" width="8" height="8" /></g>
    <path d="M1 2l8 8M9 2l-8 8M1 14l8 8M9 14l-8 8" stroke={OFF} strokeWidth=".7" />
    <path d="M16 1l5 5-5 5-5-5z" fill="none" stroke={OFF} />
    <text x="12" y="23" fontSize="14" fill={OFF} fontFamily="Liberation Serif">&#949;</text>
  </Icon>
);
const OffsetOffIcon = () => (
  <Icon>
    <path d="M2 3h20l-2 19H4z" fill="#efefef" stroke={OFF} />
    <path d="M2 3l10 12L22 3M12 15l-8 7M12 15l8 7" fill="none" stroke={OFF} />
    <g fill="#eee" stroke={OFF} strokeWidth=".7"><circle cx="2" cy="3" r="1.5" /><circle cx="22" cy="3" r="1.5" /></g>
  </Icon>
);
const LabelIcon = () => (
  <Icon>
    <path d="M6 3q5 4 9 2 3 1 3 6" fill="none" stroke="#3f6ea3" strokeDasharray="3 1" />
    <path d="M16 1l1.500 3 3-.3-2 2.300 1 3-3-1.500-3 1.500 1-3-2-2.300 3 .3z" fill="#5b87ad" />
    <text x="1" y="20" fontSize="18" fontWeight="700" fill="#4f7ba3" stroke="#2f5577" strokeWidth=".5">A</text>
    <Gear x={14} y={14} />
  </Icon>
);
const SelectBoxIcon = () => (
  <Icon>
    <rect x="2" y="2" width="18" height="18" fill="none" stroke="#444" strokeDasharray="2 2" />
    <g fill="#eee" stroke="#333" strokeWidth=".7"><rect x="0" y="0" width="3.5" height="3.5" /><rect x="18" y="0" width="3.5" height="3.5" /><rect x="0" y="18" width="3.5" height="3.5" /><rect x="18" y="18" width="3.5" height="3.5" /></g>
    <path d="M5 2l2 16 4-3 3 7 3-1-3-7h6z" fill="#fff" stroke="#222" strokeWidth=".9" />
  </Icon>
);
const Node = ({ x, y }) => <circle cx={x} cy={y} r="2.6" fill="#3e7de0" />;
const PolyAddIcon = () => (
  <Icon>
    <path d="M3 3l15-2-7 17-3 1z" fill="none" stroke="#222" strokeWidth="1.3" />
    <Node x={3} y={3} /><Node x={17} y={1} /><Node x={2} y={15} /><Node x={9} y={19} />
    <Plus x={15} y={15} />
  </Icon>
);
const LineAddIcon = () => (
  <Icon>
    <path d="M18 2H6L2 12l7 8" fill="none" stroke="#222" strokeWidth="1.3" />
    <Node x={18} y={2} /><Node x={6} y={2} /><Node x={2} y={12} /><Node x={9} y={20} />
    <Plus x={15} y={15} />
  </Icon>
);
const StarAddIcon = () => (
  <Icon>
    <path d="M11 1l3 7 7.500.8-5.500 5 1.500 7.200-6.500-3.800-6.500 3.800L6 14 .5 8.800 8 8z" fill="#fbe07a" stroke="#d8b56e" />
    <Plus x={15} y={15} />
  </Icon>
);
const TextAddIcon = () => (
  <Icon>
    <rect x="0" y="17" width="3.5" height="3.5" fill="#bbb" stroke="#888" strokeWidth=".6" />
    <text x="5" y="18" fontSize="17" fontWeight="700" fill="#444" fontFamily="Liberation Serif">T</text>
    <Plus x={15} y={15} />
  </Icon>
);
const BalloonIcon = () => (
  <Icon>
    <path d="M1 1h22v17H10l-6 5 1-5H1z" fill="#eef3f5" stroke="#7c8c96" />
    <text x="6" y="15" fontSize="16" fontWeight="700" fill="#333" fontFamily="Liberation Serif">T</text>
  </Icon>
);
const LogoIcon = () => (
  <Icon>
    <path d="M14 0l3 5-9 9-1-5zM10 24l-3-5 9-9 1 5z" fill="#a9c341" />
    <path d="M8 14l2 2-3 3-1-3z" fill="#7d9a2b" />
  </Icon>
);

/* panel icons */
const BrushSmall = () => (
  <Small>
    <path d="M8 9l6-7 1 1-5 8z" fill="#a4703a" />
    <path d="M1 11q3-5 7-3l2 3q-3 4-9 1z" fill="#e0b83c" stroke="#c0712c" strokeWidth=".7" />
    <path d="M2 11l3-3" stroke="#c23a2e" />
    <path d="M4 12l3-3" stroke="#5b87ad" />
  </Small>
);
const AddGroupSmall = () => (
  <Small>
    <path d="M2 5h6v9H2z" fill="#fff" stroke="#888" />
    <path d="M5 3h6v10H5z" fill="#eee" stroke="#666" />
    <path d="M7 1h2v12" stroke="#666" fill="none" />
    <rect x="10" y="10" width="6" height="6" fill="#fff" stroke="#5a9a5a" strokeWidth="1.4" />
  </Small>
);
const MiniCaret = () => <path d="M11 13h5l-2.500 3z" fill="#555" />;
const EyeSmall = () => (
  <Small>
    <path d="M0 7q8-8 15 0-7 7-15 0z" fill="#e4e4e4" stroke="#aaa" />
    <circle cx="7.5" cy="7" r="3.5" fill="#6088ac" />
    <circle cx="7.5" cy="7" r="1.5" fill="#223" />
    <MiniCaret />
  </Small>
);
const FunnelSmall = () => (
  <Small>
    <path d="M0 2h15l-5 6v7l-4-2V8z" fill="#6f97bd" stroke="#466d90" strokeWidth=".7" />
    <rect x="0" y="0" width="15" height="2.5" fill="#e6d02c" />
    <MiniCaret />
  </Small>
);
const EpsilonSmall = () => (
  <Small>
    <text x="0" y="13" fontSize="21" fill="#6f5a86" fontFamily="Liberation Serif">&#949;</text>
    <path d="M9 10h7v6H9z" fill="#dcdcdc" />
    <path d="M11 10v6M14 10v6" stroke="#fff" />
  </Small>
);
const ExpandSmall = ({ up }) => (
  <Small>
    <path d="M1 3h5M3 3v10h3M3 8h3" stroke="#aaa" fill="none" />
    <rect x="1" y="1.5" width="3" height="3" fill="#e8a93c" />
    <rect x="6" y="6.5" width="3" height="3" fill="#e8a93c" />
    <rect x="6" y="11.5" width="3" height="3" fill="#e8a93c" />
    <path d={up ? "M13 1l4 6h-2v8h-4V7H9z" : "M13 15l4-6h-2V1h-4v8H9z"} fill="#5b87ad" stroke="#3f6585" strokeWidth=".5" />
  </Small>
);
const RemoveSmall = () => (
  <Small>
    <path d="M1 13V1h12v9" fill="#fff" stroke="#888" strokeWidth="1.2" />
    <path d="M1 13h7" stroke="#888" />
    <rect x="9" y="11" width="7" height="4" rx="1" fill="#d33b3b" />
    <path d="M10.5 13h4" stroke="#fff" />
  </Small>
);
const QgisLogo = () => (
  <svg width="16" height="16" viewBox="0 0 16 16">
    <circle cx="7.5" cy="7" r="5" fill="none" stroke="#8db33f" strokeWidth="3" />
    <path d="M8 8l6 7" stroke="#8db33f" strokeWidth="3" />
    <path d="M3 11l3 3" stroke="#c4a13a" strokeWidth="2" />
  </svg>
);

const menus = [
  [61, "Pro", "y", "ecto"],
  [43, "", "E", "ditar"],
  [31, "", "V", "er"],
  [41, "", "C", "apa"],
  [90, "Confi", "g", "uración"],
  [96, "Co", "m", "plementos"],
  [59, "Vect", "o", "rial"],
  [46, "", "R", "áster"],
  [86, "Base de ", "d", "atos"],
  [38, "", "W", "eb"],
  [43, "", "M", "alla"],
  [61, "Pro", "c", "esos"],
  [50, "A", "y", "uda"],
];

export default function App() {
  return (
    <Page>
      <GlobalStyle />
      <TitleBar>
        <QgisLogo />
        *Proyecto sin título — QGIS
      </TitleBar>
      <MenuBar>
        {menus.map(([w, a, u, b]) => (
          <MenuItem key={a + u + b} $w={w}>
            {a}<u>{u}</u>{b}
          </MenuItem>
        ))}
      </MenuBar>

      <Toolbar>
        <Grip $w={10} />
        <Btn><NewIcon /></Btn>
        <Btn><OpenIcon /></Btn>
        <Btn><SaveIcon /></Btn>
        <Btn><ProjectIcon /></Btn>
        <Btn><LayoutIcon /></Btn>
        <Btn><StyleIcon /></Btn>
        <Grip $w={16} />
        <Btn $on><PanIcon /></Btn>
        <Btn><PanSelIcon /></Btn>
        <Btn><ZoomInIcon /></Btn>
        <Btn><ZoomOutIcon /></Btn>
        <Btn><ZoomFullIcon /></Btn>
        <Btn><ZoomSelIcon /></Btn>
        <Btn><ZoomLayerIcon /></Btn>
        <Btn><ZoomNativeIcon /></Btn>
        <Btn><ZoomLastIcon /></Btn>
        <Btn><ZoomLastIcon off /></Btn>
        <Btn><NewMapIcon /></Btn>
        <Btn><New3dIcon /></Btn>
        <Btn><BookmarkNewIcon /></Btn>
        <Btn><BookmarksIcon /></Btn>
        <Btn><ClockIcon /></Btn>
        <Btn><RefreshIcon /></Btn>
        <Grip $w={16} />
        <Btn><IdentifyIcon /></Btn>
        <Btn><AbacusIcon /></Btn>
        <Btn $on><ToolboxIcon /></Btn>
        <Btn><SumIcon /></Btn>
        <Btn><FormIcon /></Btn>
        <Caret />
        <Btn><MeasureIcon /></Btn>
        <Caret $w={12} />
        <Btn><AnnotationIcon /></Btn>
        <Btn><ProcessingIcon /></Btn>
        <Caret $off />
      </Toolbar>

      <Toolbar>
        <Grip $w={10} />
        <Btn><DataSourceIcon /></Btn>
        <Btn><GpkgIcon /></Btn>
        <Btn><VertexIcon /></Btn>
        <Btn><FeatherIcon /></Btn>
        <Btn><ChipIcon /></Btn>
        <Btn><MeshIcon /></Btn>
        <Sep $w={8} />
        <Btn><EditsIcon /></Btn>
        <Sep $w={8} />
        <Grip $w={14} />
        <Btn><PencilsOffIcon /></Btn>
        <Btn><PencilIcon /></Btn>
        <Btn><SaveIcon off /></Btn>
        <Btn><BlobOffIcon /></Btn>
        <Btn><CrossOffIcon /></Btn>
        <Caret $off />
        <Btn><TableOffIcon /></Btn>
        <Btn><TrashOffIcon /></Btn>
        <Btn><ScissorsOffIcon /></Btn>
        <Btn><CopyIcon /></Btn>
        <Btn><PasteOffIcon /></Btn>
        <Btn><UndoOffIcon /></Btn>
        <Btn><UndoOffIcon flip /></Btn>
        <Grip $w={15} />
        <Btn><AbcYellowIcon /></Btn>
        <Btn><DiagramIcon /></Btn>
        <Sep $w={9} />
        <Btn $on>
          <PinIcon>
            <path d="M0 8l5-5h16v10H5z" fill="#e8f1fb" stroke="#3d8bd8" strokeWidth="1.2" />
            <text x="5" y="12" fontSize="10" fontWeight="700" fill="#223">ab</text>
          </PinIcon>
        </Btn>
        <Btn><AbcRedIcon /></Btn>
        <Sep $w={7} />
        <Btn>
          <PinIcon off>
            <Tag text="ab" />
          </PinIcon>
        </Btn>
        <Btn><AbcEyeIcon /></Btn>
        <Btn><AbcBadgeIcon glyph="arrow" /></Btn>
        <Btn><AbcBadgeIcon glyph="turn" /></Btn>
        <Btn><AbcBadgeIcon glyph="pen" /></Btn>
        <Grip $w={16} />
        <Btn><GlobeAddIcon /></Btn>
        <Btn><GlobeSearchIcon /></Btn>
        <Btn><GlobeBinoIcon /></Btn>
        <Grip $w={16} />
        <Btn><PythonIcon /></Btn>
      </Toolbar>

      <Toolbar $h={37}>
        <Grip $w={9} />
        <Btn><SelectIcon /></Btn>
        <Caret $w={13} />
        <Btn><SelectFormIcon /></Btn>
        <Caret $w={13} />
        <Btn><DeselectIcon /></Btn>
        <Caret $w={9} />
        <Btn><SelectLocIcon /></Btn>
        <Grip $w={17} />
        <Btn><MoveLayerIcon /></Btn>
        <Grip $w={17} />
        <Btn><SplitOffIcon /></Btn>
        <Btn><ReshapeOffIcon /></Btn>
        <Caret $off />
        <Btn><SplitPartsOffIcon /></Btn>
        <Btn><OffsetOffIcon /></Btn>
        <Caret $off />
        <Grip $w={18} />
        <Btn><LabelIcon /></Btn>
        <Caret />
        <Btn><SelectBoxIcon /></Btn>
        <Btn><PolyAddIcon /></Btn>
        <Btn><LineAddIcon /></Btn>
        <Btn><StarAddIcon /></Btn>
        <Btn><TextAddIcon /></Btn>
        <Sep $w={8} />
        <Btn><BalloonIcon /></Btn>
        <Caret />
        <Grip $w={17} />
        <Btn><LogoIcon /></Btn>
      </Toolbar>

      <Main>
        <Side>
          <DockHead>
            Capas
            <DockButtons>
              <DockBtn>
                <rect x=".5" y=".5" width="10" height="10" rx="1.5" fill="none" stroke="#777" />
                <path d="M4 2.5h4.500V7M2.500 4H7v4.500H2.500z" fill="none" stroke="#555" />
              </DockBtn>
              <DockBtn>
                <rect x=".5" y=".5" width="10" height="10" rx="1.5" fill="none" stroke="#777" />
                <path d="M3 3l5 5M8 3L3 8" stroke="#333" strokeWidth="1.5" />
              </DockBtn>
            </DockButtons>
          </DockHead>
          <PanelBar>
            <PanelBtn $w={26}><BrushSmall /></PanelBtn>
            <PanelBtn $w={26}><AddGroupSmall /></PanelBtn>
            <PanelBtn $w={25}><EyeSmall /></PanelBtn>
            <PanelBtn $w={25}><FunnelSmall /></PanelBtn>
            <PanelBtn $w={21}><EpsilonSmall /></PanelBtn>
            <PanelBtn $w={13}><Caret $w={8} /></PanelBtn>
            <PanelBtn $w={26}><ExpandSmall /></PanelBtn>
            <PanelBtn $w={24}><ExpandSmall up /></PanelBtn>
            <PanelBtn $w={24}><RemoveSmall /></PanelBtn>
          </PanelBar>
          <Tree>
            <LayerRow>
              <Check>
                <svg width="10" height="10" viewBox="0 0 10 10"><path d="M1 5.5l3 3 5-8" fill="none" stroke="#111" strokeWidth="1.7" /></svg>
              </Check>
              <Swatch />
              <LayerName>CATAST_Pol_Municipio</LayerName>
            </LayerRow>
          </Tree>
        </Side>
        <Splitter />
        <Canvas>
          <MapSvg viewBox="252 157 923 851">
            <g fill="#7b888b" stroke="#555f62" strokeWidth=".9" strokeLinejoin="round">
              <path d={OUTLINE_D} />
              <path d={ISLANDS_D} />
            </g>
            <path d={BORDERS_D} fill="none" stroke="#363d3f" strokeWidth="1" strokeLinejoin="round" />
            <path d={YELLOW_D} fill="#ffff00" stroke="#4a4a20" strokeWidth=".7" strokeLinejoin="round" />
          </MapSvg>
        </Canvas>
      </Main>
    </Page>
  );
}
